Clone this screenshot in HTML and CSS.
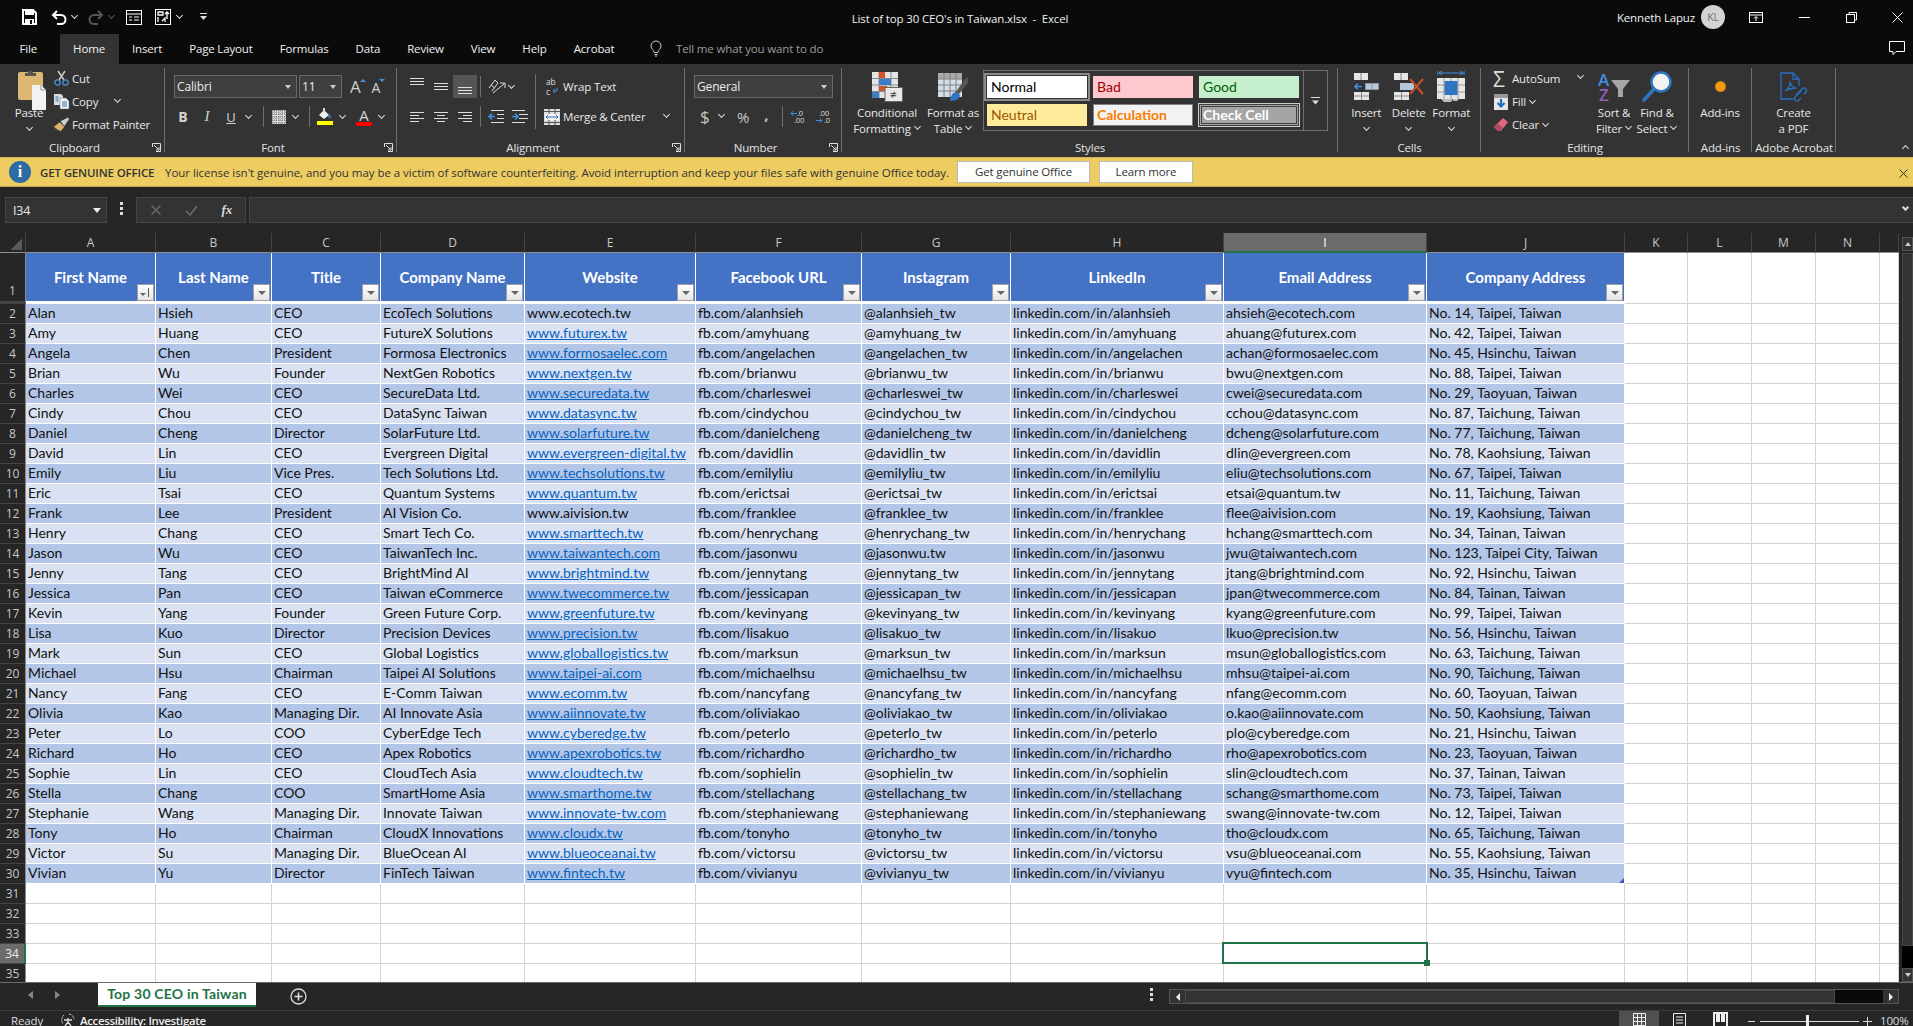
FILE: index.html
```html
<!DOCTYPE html>
<html lang="en">
<head>
  <meta charset="UTF-8">
  <title>List of top 30 CEO's in Taiwan.xlsx - Excel</title>
  <link rel="stylesheet" href="styles.css">
</head>
<body>
<div class="window">

  <!-- circuit wallpaper behind the title bar -->
  <svg class="circuit" width="520" height="64" viewBox="0 0 520 64" fill="none" stroke="#262626" stroke-width="3">
    <circle cx="36" cy="14" r="3.5"/><path d="M40 14H209"/><circle cx="213" cy="14" r="3.5"/>
    <circle cx="56" cy="41" r="17" stroke-width="4"/><path d="M49 34l15 15M48 46V33h13" stroke-width="4"/>
    <circle cx="102" cy="33" r="3.5"/><path d="M106 33H200L228 62"/><circle cx="242" cy="43" r="3.5"/><path d="M246 43L268 64M238 43H212L192 61H27"/>
    <circle cx="310" cy="17" r="30" stroke-width="5"/><path d="M298 5H322L306 30" stroke-width="5"/>
    <path d="M267 7L290 52H393L423 23H520M467 64L500 32H520M295 40L320 62H420"/>
  </svg>

  <div class="titlebar">
    <div class="qat">
      <svg class="q-save" width="15" height="16" viewBox="0 0 15 16"><path d="M1 1h10l3 3v11H1z" fill="none" stroke="#fff" stroke-width="2"/><rect x="3" y="1" width="9" height="5" fill="#fff"/><rect x="3" y="10" width="9" height="5" fill="#fff"/><rect x="8" y="11" width="2" height="4" fill="#0a0a0a"/></svg>
      <svg class="q-undo" width="16" height="15" viewBox="0 0 16 15" fill="none" stroke="#fff" stroke-width="2"><path d="M6 1L2 5l4 4M2 5h8a4 4 0 0 1 0 9H6"/></svg>
      <span class="chev q-c1"></span>
      <svg class="q-redo" width="16" height="15" viewBox="0 0 16 15" fill="none" stroke="#555" stroke-width="2"><path d="M10 1l4 4-4 4M14 5H6a4 4 0 0 0 0 9h4"/></svg>
      <span class="chev dim q-c2"></span>
      <svg class="q-form" width="16" height="15" viewBox="0 0 16 15" fill="none" stroke="#fff"><rect x=".5" y=".5" width="15" height="14"/><path d="M1 4h14M3 7h3M3 10h3M8 7h5M8 10h5"/></svg>
      <svg class="q-print" width="16" height="16" viewBox="0 0 16 16" fill="none" stroke="#fff"><rect x=".5" y=".5" width="15" height="15"/><path d="M3 3h5v3H3zM3 8v5M7 12l3-3 0 4M12 3v7M10 5l2-2 2 2" stroke-width="1.3"/></svg>
      <span class="chev q-c3"></span>
      <svg class="q-cust" width="7" height="8" viewBox="0 0 7 8" fill="#ddd"><rect width="7" height="1"/><path d="M0 3h7L3.500 7z"/></svg>
    </div>
    <div class="doc-title">List of top 30 CEO's in Taiwan.xlsx &nbsp;-&nbsp; Excel</div>
    <div class="winctl">
      <span class="user">Kenneth Lapuz</span>
      <span class="avatar">KL</span>
      <svg class="w-disp" width="14" height="11" viewBox="0 0 14 11" fill="none" stroke="#fff"><rect x=".5" y=".5" width="13" height="10"/><path d="M1 3h12M7 9V5M5 6.500l2-2 2 2"/></svg>
      <svg class="w-min" width="11" height="1" viewBox="0 0 11 1"><rect width="11" height="1" fill="#fff"/></svg>
      <svg class="w-max" width="11" height="11" viewBox="0 0 11 11" fill="none" stroke="#fff"><rect x=".5" y="2.500" width="8" height="8"/><path d="M3 2V.500h7.500V8H9"/></svg>
      <svg class="w-close" width="11" height="11" viewBox="0 0 11 11" stroke="#fff"><path d="M.5.500l10 10M10.500.500l-10 10"/></svg>
    </div>
  </div>

  <div class="tabs">
    <span class="tab first">File</span>
    <span class="tab active">Home</span>
    <span class="tab">Insert</span>
    <span class="tab">Page Layout</span>
    <span class="tab">Formulas</span>
    <span class="tab">Data</span>
    <span class="tab">Review</span>
    <span class="tab">View</span>
    <span class="tab">Help</span>
    <span class="tab">Acrobat</span>
    <svg class="bulb" width="12" height="16" viewBox="0 0 12 16" fill="none" stroke="#ccc"><path d="M4 11.500C4 9 1 8 1 5a5 5 0 0 1 10 0c0 3-3 4-3 6.500zM4.500 13.500h3M5 15h2"/></svg>
    <span class="tell">Tell me what you want to do</span>
    <svg class="comment" width="16" height="15" viewBox="0 0 16 15" fill="none" stroke="#fff"><path d="M.5.500h15v10H7l-3 3v-3H.5z"/></svg>
  </div>

  <div class="ribbon">

    <div class="group g-clip">
      <div class="body">
        <div class="big b-paste">
          <div class="big-icon">
            <svg width="28" height="38" viewBox="0 0 28 38"><rect y="0" width="25" height="28" rx="2" fill="#dcb872"/><path d="M7 1h3a2.500 2.500 0 0 1 5 0h3v3H7z" fill="#555"/><path d="M14 13h9l5 5v20H14z" fill="#f2f2f2"/><path d="M23 13v5h5" fill="none" stroke="#999"/></svg>
          </div>
          <div class="big-line">Paste</div>
          <div class="big-line"><span class="chev"></span></div>
        </div>
        <div class="small-list">
          <div class="small">
            <svg class="s-ic" width="15" height="15" viewBox="0 0 15 15" fill="none"><path d="M4 0l6 9M11 0L5 9" stroke="#ccc" stroke-width="1.500"/><circle cx="3.500" cy="11.500" r="2.700" stroke="#4a90d9" stroke-width="1.300"/><circle cx="11.500" cy="11.500" r="2.700" stroke="#4a90d9" stroke-width="1.300"/></svg>
            Cut
          </div>
          <div class="small">
            <svg class="s-ic" width="15" height="15" viewBox="0 0 15 15"><path d="M0 0h7l2 2v9H0z" fill="#ddd"/><path d="M6 4h6l3 3v8H6z" fill="#f4f4f4" stroke="#666" stroke-width=".5"/><path d="M8 8h5M8 10h5M8 12h5M1.500 3h3M1.500 5h3M1.500 7h3" stroke="#2f75c0"/></svg>
            Copy <span class="chev c-copy"></span>
          </div>
          <div class="small">
            <svg class="s-ic" width="16" height="15" viewBox="0 0 16 15"><path d="M0 10l6-5 5 5-4 5-2-2-1 1-1-2-1 0z" fill="#dcb06a"/><path d="M7 4l8-4 1 2-5 7z" fill="#ccc"/></svg>
            Format Painter
          </div>
        </div>
      </div>
      <div class="label">Clipboard</div>
      <svg class="launch" width="9" height="9" viewBox="0 0 9 9" fill="none" stroke="#ddd"><path d="M.5 4V.500H8.500V8.500H4M2 2l5 5M7 4v3H4"/></svg>
    </div>

    <div class="group g-font">
      <div class="body col">
        <div class="row1 pad-font">
          <div class="combo c-font"><span>Calibri</span><i class="tri"></i></div>
          <div class="combo c-size"><span>11</span><i class="tri"></i></div>
          <span class="grow-a up">A</span>
          <span class="grow-a down">A</span>
        </div>
        <div class="row2 pad-font2">
          <span class="tool bold">B</span>
          <span class="tool ital">I</span>
          <span class="tool under">U</span>
          <span class="drop"><span class="chev"></span></span>
          <span class="vsep s5"></span>
          <span class="tool">
            <svg width="14" height="14" viewBox="0 0 14 14"><rect width="14" height="14" fill="#e0e0e0"/><path d="M1 0v14M4 0v14M7 0v14M10 0v14M13 0v14M0 1h14M0 4h14M0 7h14M0 10h14M0 13h14" stroke="#666" stroke-dasharray="1 1"/></svg>
          </span>
          <span class="drop"><span class="chev"></span></span>
          <span class="vsep s8"></span>
          <span class="tool">
            <svg width="16" height="17" viewBox="0 0 16 17"><path d="M2 7l5-5 5 5-5 4z" fill="#f0f0f0"/><path d="M6 0h2v4H6z" fill="#ddd"/><path d="M12 6c2 1 2 3 2 4h-3z" fill="#2f75c0"/><rect y="13" width="16" height="4" fill="#ff0"/></svg>
          </span>
          <span class="drop"><span class="chev"></span></span>
          <span class="tool fcolor">A</span>
          <span class="drop"><span class="chev"></span></span>
        </div>
      </div>
      <div class="label">Font</div>
      <svg class="launch" width="9" height="9" viewBox="0 0 9 9" fill="none" stroke="#ddd"><path d="M.5 4V.500H8.500V8.500H4M2 2l5 5M7 4v3H4"/></svg>
    </div>

    <div class="group g-align">
      <div class="body">
        <div class="col al-left">
          <div class="row1">
            <span class="tool"><svg width="14" height="8" viewBox="0 0 14 8" stroke="#ddd"><path d="M0 .500h14M0 3.500h14M0 6.500h14"/></svg></span>
            <span class="tool"><svg width="14" height="8" viewBox="0 0 14 8" stroke="#ddd"><path d="M0 .500h14M0 3.500h14M0 6.500h14"/></svg></span>
            <span class="tool on"><svg class="al-bot" width="14" height="8" viewBox="0 0 14 8" stroke="#ddd"><path d="M0 .500h14M0 3.500h14M0 6.500h14"/></svg></span>
            <span class="vsep s3"></span>
            <span class="tool t-orient"><svg width="18" height="16" viewBox="0 0 18 16" fill="none" stroke="#ddd"><path d="M1 9l6-8 3 3-6 8M3 6l4 3M5 14L16 5M12 4h5v5"/></svg></span>
            <span class="drop d-orient"><span class="chev"></span></span>
          </div>
          <div class="row2">
            <span class="tool"><svg width="14" height="10" viewBox="0 0 14 10" stroke="#ddd"><path d="M0 .500h14M0 3.500h9M0 6.500h14M0 9.500h9"/></svg></span>
            <span class="tool"><svg width="14" height="10" viewBox="0 0 14 10" stroke="#ddd"><path d="M0 .500h14M3 3.500h8M0 6.500h14M3 9.500h8"/></svg></span>
            <span class="tool"><svg width="14" height="10" viewBox="0 0 14 10" stroke="#ddd"><path d="M0 .500h14M5 3.500h9M0 6.500h14M5 9.500h9"/></svg></span>
            <span class="vsep s3"></span>
            <span class="tool t-ind1"><svg width="16" height="13" viewBox="0 0 16 13"><path d="M3 .500h13M9 4.500h7M9 8.500h7M3 12.500h13" stroke="#ddd"/><path d="M7 6.500H1M4 3.500l-3 3 3 3" stroke="#3f8ee0" stroke-width="1.500" fill="none"/></svg></span>
            <span class="tool t-ind2"><svg width="16" height="13" viewBox="0 0 16 13"><path d="M0 .500h13M7 4.500h9M7 8.500h9M0 12.500h13" stroke="#ddd"/><path d="M0 6.500h6M3 3.500l3 3-3 3" stroke="#3f8ee0" stroke-width="1.500" fill="none"/></svg></span>
          </div>
        </div>
        <span class="vsep tall"></span>
        <div class="col al-right">
          <div class="row1 wrap-row">
            <svg class="wrap-ic" width="12" height="18" viewBox="0 0 12 18"><text x="0" y="7" font-size="8.500" fill="#ddd" font-family="Open Sans">ab</text><text x="0" y="16.500" font-size="8.500" fill="#ddd" font-family="Open Sans">c</text><path d="M11 10v3H7M9 11l-2 2 2 2" fill="none" stroke="#3f8ee0"/></svg>
            Wrap Text
          </div>
          <div class="row2 merge-row">
            <svg class="merge-ic" width="16" height="16" viewBox="0 0 16 16"><rect width="16" height="16" fill="#ddd"/><rect x="1" y="5" width="14" height="6" fill="#f6f6f6"/><path d="M0 2.500h16M0 13.500h16M5 0v5M11 0v5M5 11v5M11 11v5" stroke="#555"/><path d="M2 8h12M4 6L2 8l2 2M12 6l2 2-2 2" fill="none" stroke="#2f75c0"/></svg>
            Merge &amp; Center
            <span class="chev c-merge"></span>
          </div>
        </div>
      </div>
      <div class="label">Alignment</div>
      <svg class="launch" width="9" height="9" viewBox="0 0 9 9" fill="none" stroke="#ddd"><path d="M.5 4V.500H8.500V8.500H4M2 2l5 5M7 4v3H4"/></svg>
    </div>

    <div class="group g-num">
      <div class="body col">
        <div class="row1 pad-font">
          <div class="combo c-num"><span>General</span><i class="tri"></i></div>
        </div>
        <div class="row2 num-row">
          <span class="n-dollar">$</span>
          <span class="chev n-c"></span>
          <span class="n-pct">%</span>
          <span class="n-comma">,</span>
          <span class="vsep n-sep"></span>
          <svg class="n-inc" width="15" height="14" viewBox="0 0 15 14"><text x="6" y="6" font-size="7.500" fill="#ddd" font-family="Open Sans">.0</text><text x="3" y="13" font-size="7.500" fill="#ddd" font-family="Open Sans">.00</text><path d="M6 3.500H0M2.500 1L0 3.500 2.500 6" fill="none" stroke="#3f8ee0"/></svg>
          <svg class="n-dec" width="15" height="14" viewBox="0 0 15 14"><text x="3" y="6" font-size="7.500" fill="#ddd" font-family="Open Sans">.00</text><text x="8" y="13" font-size="7.500" fill="#ddd" font-family="Open Sans">.0</text><path d="M0 10.500h6M3.500 8L6 10.500 3.500 13" fill="none" stroke="#3f8ee0"/></svg>
        </div>
      </div>
      <div class="label">Number</div>
      <svg class="launch" width="9" height="9" viewBox="0 0 9 9" fill="none" stroke="#ddd"><path d="M.5 4V.500H8.500V8.500H4M2 2l5 5M7 4v3H4"/></svg>
    </div>

    <div class="group g-styles">
      <div class="body">
        <div class="big b-cf">
          <div class="big-icon">
            <svg width="31" height="30" viewBox="0 0 31 30"><rect width="26" height="26" fill="#e4e4e4"/><path d="M7 0v26M19 0v26M0 6.500h26M0 13h26M0 19.500h26" stroke="#8a8a8a"/><rect x="7" y="0" width="6" height="6" fill="#d1532b"/><rect x="7" y="7" width="12" height="6" fill="#3a7cc8"/><rect x="7" y="14" width="8" height="5" fill="#d1532b"/><rect x="0" y="20" width="7" height="6" fill="#3a7cc8"/><rect x="13" y="15.500" width="17.500" height="14" fill="#e8e8e8" stroke="#666"/><text x="18" y="27" font-size="12" fill="#333" font-family="Open Sans">≠</text></svg>
          </div>
          <div class="big-line">Conditional</div>
          <div class="big-line">Formatting <span class="chev in"></span></div>
        </div>
        <div class="big b-fat">
          <div class="big-icon">
            <svg width="30" height="28" viewBox="0 0 30 28"><rect width="24" height="24" fill="#d3dde6"/><rect width="24" height="6" fill="#aaa"/><path d="M6 0v24M12 0v24M18 0v24M0 6h24M0 12h24M0 18h24" stroke="#808080"/><path d="M17 20L27 6l3-2v6l-9 11z" fill="#555"/><path d="M12 28c0-5 3-9 6-9l4 3c0 3-3 6-10 6z" fill="#2f75c0"/></svg>
          </div>
          <div class="big-line">Format as</div>
          <div class="big-line">Table <span class="chev in"></span></div>
        </div>
        <div class="gallery">
          <div class="cells">
            <div class="st normal">Normal</div>
            <div class="st bad">Bad</div>
            <div class="st good">Good</div>
            <div class="st neutral">Neutral</div>
            <div class="st calc">Calculation</div>
            <div class="st check">Check Cell</div>
          </div>
          <div class="more"><svg width="9" height="8" viewBox="0 0 9 8" fill="#ddd"><rect width="9" height="1"/><path d="M1 3.500h7L4.500 7.500z"/></svg></div>
        </div>
      </div>
      <div class="label">Styles</div>
    </div>

    <div class="group g-cells">
      <div class="body">
        <div class="big b-cell">
          <div class="big-icon">
            <svg width="26" height="27" viewBox="0 0 26 27"><path d="M1 0h14v7H1z" fill="#e6e6e6"/><path d="M8 0v7" stroke="#888"/><rect x="12" y="10" width="14" height="7" fill="#8796a8"/><rect x="13" y="11" width="5.500" height="5" fill="#b6c7da"/><rect x="19.500" y="11" width="5.500" height="5" fill="#b6c7da"/><path d="M9 13.500H2M5 10.500l-3 3 3 3" fill="none" stroke="#3f8ee0" stroke-width="1.600"/><rect x="1" y="19" width="15" height="8" fill="#e6e6e6"/><path d="M8.500 19v8M1 23h15" stroke="#888"/></svg>
          </div>
          <div class="big-line">Insert</div>
          <div class="big-line"><span class="chev"></span></div>
        </div>
        <div class="big b-cell">
          <div class="big-icon">
            <svg width="30" height="27" viewBox="0 0 30 27"><path d="M0 0h14v7H0z" fill="#e6e6e6"/><path d="M7 0v7" stroke="#888"/><rect x="6" y="10" width="14" height="7" fill="#b6c7da"/><rect x="0" y="19" width="15" height="8" fill="#e6e6e6"/><path d="M7.500 19v8M0 23h15" stroke="#888"/><path d="M16 6l13 15M29 6L16 21" stroke="#c8502a" stroke-width="2"/></svg>
          </div>
          <div class="big-line">Delete</div>
          <div class="big-line"><span class="chev"></span></div>
        </div>
        <div class="big b-cell">
          <div class="big-icon">
            <svg width="28" height="31" viewBox="0 0 28 31"><path d="M1 0v4M27 0v4M2 2h24M5 0L2 2l3 2M23 0l3 2-3 2" fill="none" stroke="#3f8ee0"/><rect y="7" width="28" height="21" fill="#e6e6e6"/><path d="M7 7v21M21 7v21M14 7v21M0 14h28M0 21h28" stroke="#999"/><rect x="7.500" y="10" width="13" height="14" fill="#2f75c0"/><path d="M4 28h12l-2 3H7zM16 28h6l-2 2h-4z" fill="#bbb"/></svg>
          </div>
          <div class="big-line">Format</div>
          <div class="big-line"><span class="chev"></span></div>
        </div>
      </div>
      <div class="label">Cells</div>
    </div>

    <div class="group g-edit">
      <div class="body">
        <div class="small-list e-list">
          <div class="small"><span class="sigma">Σ</span> AutoSum <span class="chev c-sum"></span></div>
          <div class="small">
            <svg class="e-ic" width="14" height="16" viewBox="0 0 14 16"><rect width="14" height="16" fill="#e6e6e6"/><rect width="14" height="4" fill="#999"/><path d="M7 5v7M3.500 9L7 12.500 10.500 9" fill="none" stroke="#1f6fc4" stroke-width="2.200"/></svg>
            Fill <span class="chev in"></span>
          </div>
          <div class="small">
            <svg class="e-ic" width="14" height="14" viewBox="0 0 14 14"><path d="M9 0l5 4-7 9H4L0 9z" fill="#e0697f"/><path d="M0 9l4 4h3l2-3-5-4z" fill="#b04a5f"/></svg>
            Clear <span class="chev in"></span>
          </div>
        </div>
        <div class="big b-sort">
          <div class="big-icon">
            <svg width="32" height="30" viewBox="0 0 32 30"><text x="0" y="14" font-size="17" fill="#3f8ee0" font-family="Open Sans" font-weight="600">A</text><text x="1" y="29" font-size="17" fill="#8e5fb5" font-family="Open Sans" font-weight="600">Z</text><path d="M13 8h19l-7 9v8h-5v-8z" fill="#a5a5a5"/></svg>
          </div>
          <div class="big-line">Sort &amp;</div>
          <div class="big-line">Filter <span class="chev in"></span></div>
        </div>
        <div class="big b-find">
          <div class="big-icon">
            <svg width="30" height="31" viewBox="0 0 30 31"><circle cx="19" cy="11" r="9.500" fill="#f2f2f2" stroke="#2f75c0" stroke-width="2.400"/><path d="M12 18L2 29" stroke="#2f75c0" stroke-width="3.500" stroke-linecap="round"/></svg>
          </div>
          <div class="big-line">Find &amp;</div>
          <div class="big-line">Select <span class="chev in"></span></div>
        </div>
      </div>
      <div class="label">Editing</div>
    </div>

    <div class="group g-addin">
      <div class="body">
        <div class="big b-full">
          <div class="big-icon"><span class="dot"></span></div>
          <div class="big-line">Add-ins</div>
        </div>
      </div>
      <div class="label">Add-ins</div>
    </div>

    <div class="group g-pdf">
      <div class="body">
        <div class="big b-full">
          <div class="big-icon">
            <svg width="27" height="29" viewBox="0 0 27 29" fill="none" stroke="#2a6fc4" stroke-width="1.300"><path d="M13 27H1V1h12l6 6v7M13 1v6h6M5 19c3-1 5-6 5-9 1 4 3 6 6 6-4 0-8 1-11 3z"/><path d="M16 23l6-6a2.500 2.500 0 0 1 4 3l-2 2M21 19l-6 6a2.500 2.500 0 0 0 4 3l2-2"/></svg>
          </div>
          <div class="big-line">Create</div>
          <div class="big-line">a PDF</div>
        </div>
      </div>
      <div class="label">Adobe Acrobat</div>
    </div>

    <div class="collapse"><span class="chev flip"></span></div>
  </div>

  <div class="msgbar">
    <span class="info">i</span>
    <span class="msg-head">GET GENUINE OFFICE</span>
    <span class="msg-text">Your license isn't genuine, and you may be a victim of software counterfeiting. Avoid interruption and keep your files safe with genuine Office today.</span>
    <span class="msg-btn b1">Get genuine Office</span>
    <span class="msg-btn b2">Learn more</span>
    <svg class="msg-x" width="9" height="9" viewBox="0 0 9 9" stroke="#333"><path d="M.5.500l8 8M8.500.500l-8 8"/></svg>
  </div>

  <div class="fxbar">
    <div class="namebox"><span>I34</span><i class="tri big-tri"></i></div>
    <span class="dots"></span>
    <div class="fx-btns">
      <svg width="10" height="10" viewBox="0 0 10 10" stroke="#666" stroke-width="1.500"><path d="M.5.500l9 9M9.500.500l-9 9"/></svg>
      <svg width="13" height="11" viewBox="0 0 13 11" fill="none" stroke="#666" stroke-width="1.800"><path d="M1 6l4 4 7-9"/></svg>
      <span class="fx">fx</span>
    </div>
    <div class="fx-input"><span class="chev fx-chev"></span></div>
  </div>

  <div class="sheet">
    <div class="grid-wrap">
      <table class="grid">
        <colgroup>
          <col class="c-rh"><col class="c-a"><col class="c-b"><col class="c-c"><col class="c-d"><col class="c-e"><col class="c-f"><col class="c-g"><col class="c-h"><col class="c-i"><col class="c-j"><col class="c-k"><col class="c-l"><col class="c-l"><col class="c-l"><col class="c-o">
        </colgroup>
        <thead>
          <tr class="heads">
            <th class="corner"></th><th>A</th><th>B</th><th>C</th><th>D</th><th>E</th><th>F</th><th>G</th><th>H</th><th class="cur">I</th><th>J</th><th>K</th><th>L</th><th>M</th><th>N</th><th></th>
          </tr>
        </thead>
        <tbody>
          <tr class="r1">
            <th>1</th>
            <td class="hd">First Name<span class="filter sorted"></span></td>
            <td class="hd">Last Name<span class="filter"></span></td>
            <td class="hd">Title<span class="filter"></span></td>
            <td class="hd">Company Name<span class="filter"></span></td>
            <td class="hd">Website<span class="filter"></span></td>
            <td class="hd">Facebook URL<span class="filter"></span></td>
            <td class="hd">Instagram<span class="filter"></span></td>
            <td class="hd">LinkedIn<span class="filter"></span></td>
            <td class="hd">Email Address<span class="filter"></span></td>
            <td class="hd">Company Address<span class="filter"></span></td>
            <td></td><td></td><td></td><td></td><td></td>
          </tr>
          <tr class="dk"><th>2</th><td>Alan</td><td>Hsieh</td><td>CEO</td><td>EcoTech Solutions</td><td>www.ecotech.tw</td><td>fb.com/alanhsieh</td><td>@alanhsieh_tw</td><td>linkedin.com/in/alanhsieh</td><td>ahsieh@ecotech.com</td><td>No. 14, Taipei, Taiwan</td><td></td><td></td><td></td><td></td><td></td></tr>
          <tr class="lt"><th>3</th><td>Amy</td><td>Huang</td><td>CEO</td><td>FutureX Solutions</td><td><a href="#">www.futurex.tw</a></td><td>fb.com/amyhuang</td><td>@amyhuang_tw</td><td>linkedin.com/in/amyhuang</td><td>ahuang@futurex.com</td><td>No. 42, Taipei, Taiwan</td><td></td><td></td><td></td><td></td><td></td></tr>
          <tr class="dk"><th>4</th><td>Angela</td><td>Chen</td><td>President</td><td>Formosa Electronics</td><td><a href="#">www.formosaelec.com</a></td><td>fb.com/angelachen</td><td>@angelachen_tw</td><td>linkedin.com/in/angelachen</td><td>achan@formosaelec.com</td><td>No. 45, Hsinchu, Taiwan</td><td></td><td></td><td></td><td></td><td></td></tr>
          <tr class="lt"><th>5</th><td>Brian</td><td>Wu</td><td>Founder</td><td>NextGen Robotics</td><td><a href="#">www.nextgen.tw</a></td><td>fb.com/brianwu</td><td>@brianwu_tw</td><td>linkedin.com/in/brianwu</td><td>bwu@nextgen.com</td><td>No. 88, Taipei, Taiwan</td><td></td><td></td><td></td><td></td><td></td></tr>
          <tr class="dk"><th>6</th><td>Charles</td><td>Wei</td><td>CEO</td><td>SecureData Ltd.</td><td><a href="#">www.securedata.tw</a></td><td>fb.com/charleswei</td><td>@charleswei_tw</td><td>linkedin.com/in/charleswei</td><td>cwei@securedata.com</td><td>No. 29, Taoyuan, Taiwan</td><td></td><td></td><td></td><td></td><td></td></tr>
          <tr class="lt"><th>7</th><td>Cindy</td><td>Chou</td><td>CEO</td><td>DataSync Taiwan</td><td><a href="#">www.datasync.tw</a></td><td>fb.com/cindychou</td><td>@cindychou_tw</td><td>linkedin.com/in/cindychou</td><td>cchou@datasync.com</td><td>No. 87, Taichung, Taiwan</td><td></td><td></td><td></td><td></td><td></td></tr>
          <tr class="dk"><th>8</th><td>Daniel</td><td>Cheng</td><td>Director</td><td>SolarFuture Ltd.</td><td><a href="#">www.solarfuture.tw</a></td><td>fb.com/danielcheng</td><td>@danielcheng_tw</td><td>linkedin.com/in/danielcheng</td><td>dcheng@solarfuture.com</td><td>No. 77, Taichung, Taiwan</td><td></td><td></td><td></td><td></td><td></td></tr>
          <tr class="lt"><th>9</th><td>David</td><td>Lin</td><td>CEO</td><td>Evergreen Digital</td><td><a href="#">www.evergreen-digital.tw</a></td><td>fb.com/davidlin</td><td>@davidlin_tw</td><td>linkedin.com/in/davidlin</td><td>dlin@evergreen.com</td><td>No. 78, Kaohsiung, Taiwan</td><td></td><td></td><td></td><td></td><td></td></tr>
          <tr class="dk"><th>10</th><td>Emily</td><td>Liu</td><td>Vice Pres.</td><td>Tech Solutions Ltd.</td><td><a href="#">www.techsolutions.tw</a></td><td>fb.com/emilyliu</td><td>@emilyliu_tw</td><td>linkedin.com/in/emilyliu</td><td>eliu@techsolutions.com</td><td>No. 67, Taipei, Taiwan</td><td></td><td></td><td></td><td></td><td></td></tr>
          <tr class="lt"><th>11</th><td>Eric</td><td>Tsai</td><td>CEO</td><td>Quantum Systems</td><td><a href="#">www.quantum.tw</a></td><td>fb.com/erictsai</td><td>@erictsai_tw</td><td>linkedin.com/in/erictsai</td><td>etsai@quantum.tw</td><td>No. 11, Taichung, Taiwan</td><td></td><td></td><td></td><td></td><td></td></tr>
          <tr class="dk"><th>12</th><td>Frank</td><td>Lee</td><td>President</td><td>AI Vision Co.</td><td>www.aivision.tw</td><td>fb.com/franklee</td><td>@franklee_tw</td><td>linkedin.com/in/franklee</td><td>flee@aivision.com</td><td>No. 19, Kaohsiung, Taiwan</td><td></td><td></td><td></td><td></td><td></td></tr>
          <tr class="lt"><th>13</th><td>Henry</td><td>Chang</td><td>CEO</td><td>Smart Tech Co.</td><td><a href="#">www.smarttech.tw</a></td><td>fb.com/henrychang</td><td>@henrychang_tw</td><td>linkedin.com/in/henrychang</td><td>hchang@smarttech.com</td><td>No. 34, Tainan, Taiwan</td><td></td><td></td><td></td><td></td><td></td></tr>
          <tr class="dk"><th>14</th><td>Jason</td><td>Wu</td><td>CEO</td><td>TaiwanTech Inc.</td><td><a href="#">www.taiwantech.com</a></td><td>fb.com/jasonwu</td><td>@jasonwu.tw</td><td>linkedin.com/in/jasonwu</td><td>jwu@taiwantech.com</td><td>No. 123, Taipei City, Taiwan</td><td></td><td></td><td></td><td></td><td></td></tr>
          <tr class="lt"><th>15</th><td>Jenny</td><td>Tang</td><td>CEO</td><td>BrightMind AI</td><td><a href="#">www.brightmind.tw</a></td><td>fb.com/jennytang</td><td>@jennytang_tw</td><td>linkedin.com/in/jennytang</td><td>jtang@brightmind.com</td><td>No. 92, Hsinchu, Taiwan</td><td></td><td></td><td></td><td></td><td></td></tr>
          <tr class="dk"><th>16</th><td>Jessica</td><td>Pan</td><td>CEO</td><td>Taiwan eCommerce</td><td><a href="#">www.twecommerce.tw</a></td><td>fb.com/jessicapan</td><td>@jessicapan_tw</td><td>linkedin.com/in/jessicapan</td><td>jpan@twecommerce.com</td><td>No. 84, Tainan, Taiwan</td><td></td><td></td><td></td><td></td><td></td></tr>
          <tr class="lt"><th>17</th><td>Kevin</td><td>Yang</td><td>Founder</td><td>Green Future Corp.</td><td><a href="#">www.greenfuture.tw</a></td><td>fb.com/kevinyang</td><td>@kevinyang_tw</td><td>linkedin.com/in/kevinyang</td><td>kyang@greenfuture.com</td><td>No. 99, Taipei, Taiwan</td><td></td><td></td><td></td><td></td><td></td></tr>
          <tr class="dk"><th>18</th><td>Lisa</td><td>Kuo</td><td>Director</td><td>Precision Devices</td><td><a href="#">www.precision.tw</a></td><td>fb.com/lisakuo</td><td>@lisakuo_tw</td><td>linkedin.com/in/lisakuo</td><td>lkuo@precision.tw</td><td>No. 56, Hsinchu, Taiwan</td><td></td><td></td><td></td><td></td><td></td></tr>
          <tr class="lt"><th>19</th><td>Mark</td><td>Sun</td><td>CEO</td><td>Global Logistics</td><td><a href="#">www.globallogistics.tw</a></td><td>fb.com/marksun</td><td>@marksun_tw</td><td>linkedin.com/in/marksun</td><td>msun@globallogistics.com</td><td>No. 63, Taichung, Taiwan</td><td></td><td></td><td></td><td></td><td></td></tr>
          <tr class="dk"><th>20</th><td>Michael</td><td>Hsu</td><td>Chairman</td><td>Taipei AI Solutions</td><td><a href="#">www.taipei-ai.com</a></td><td>fb.com/michaelhsu</td><td>@michaelhsu_tw</td><td>linkedin.com/in/michaelhsu</td><td>mhsu@taipei-ai.com</td><td>No. 90, Taichung, Taiwan</td><td></td><td></td><td></td><td></td><td></td></tr>
          <tr class="lt"><th>21</th><td>Nancy</td><td>Fang</td><td>CEO</td><td>E-Comm Taiwan</td><td><a href="#">www.ecomm.tw</a></td><td>fb.com/nancyfang</td><td>@nancyfang_tw</td><td>linkedin.com/in/nancyfang</td><td>nfang@ecomm.com</td><td>No. 60, Taoyuan, Taiwan</td><td></td><td></td><td></td><td></td><td></td></tr>
          <tr class="dk"><th>22</th><td>Olivia</td><td>Kao</td><td>Managing Dir.</td><td>AI Innovate Asia</td><td><a href="#">www.aiinnovate.tw</a></td><td>fb.com/oliviakao</td><td>@oliviakao_tw</td><td>linkedin.com/in/oliviakao</td><td>o.kao@aiinnovate.com</td><td>No. 50, Kaohsiung, Taiwan</td><td></td><td></td><td></td><td></td><td></td></tr>
          <tr class="lt"><th>23</th><td>Peter</td><td>Lo</td><td>COO</td><td>CyberEdge Tech</td><td><a href="#">www.cyberedge.tw</a></td><td>fb.com/peterlo</td><td>@peterlo_tw</td><td>linkedin.com/in/peterlo</td><td>plo@cyberedge.com</td><td>No. 21, Hsinchu, Taiwan</td><td></td><td></td><td></td><td></td><td></td></tr>
          <tr class="dk"><th>24</th><td>Richard</td><td>Ho</td><td>CEO</td><td>Apex Robotics</td><td><a href="#">www.apexrobotics.tw</a></td><td>fb.com/richardho</td><td>@richardho_tw</td><td>linkedin.com/in/richardho</td><td>rho@apexrobotics.com</td><td>No. 23, Taoyuan, Taiwan</td><td></td><td></td><td></td><td></td><td></td></tr>
          <tr class="lt"><th>25</th><td>Sophie</td><td>Lin</td><td>CEO</td><td>CloudTech Asia</td><td><a href="#">www.cloudtech.tw</a></td><td>fb.com/sophielin</td><td>@sophielin_tw</td><td>linkedin.com/in/sophielin</td><td>slin@cloudtech.com</td><td>No. 37, Tainan, Taiwan</td><td></td><td></td><td></td><td></td><td></td></tr>
          <tr class="dk"><th>26</th><td>Stella</td><td>Chang</td><td>COO</td><td>SmartHome Asia</td><td><a href="#">www.smarthome.tw</a></td><td>fb.com/stellachang</td><td>@stellachang_tw</td><td>linkedin.com/in/stellachang</td><td>schang@smarthome.com</td><td>No. 73, Taipei, Taiwan</td><td></td><td></td><td></td><td></td><td></td></tr>
          <tr class="lt"><th>27</th><td>Stephanie</td><td>Wang</td><td>Managing Dir.</td><td>Innovate Taiwan</td><td><a href="#">www.innovate-tw.com</a></td><td>fb.com/stephaniewang</td><td>@stephaniewang</td><td>linkedin.com/in/stephaniewang</td><td>swang@innovate-tw.com</td><td>No. 12, Taipei, Taiwan</td><td></td><td></td><td></td><td></td><td></td></tr>
          <tr class="dk"><th>28</th><td>Tony</td><td>Ho</td><td>Chairman</td><td>CloudX Innovations</td><td><a href="#">www.cloudx.tw</a></td><td>fb.com/tonyho</td><td>@tonyho_tw</td><td>linkedin.com/in/tonyho</td><td>tho@cloudx.com</td><td>No. 65, Taichung, Taiwan</td><td></td><td></td><td></td><td></td><td></td></tr>
          <tr class="lt"><th>29</th><td>Victor</td><td>Su</td><td>Managing Dir.</td><td>BlueOcean AI</td><td><a href="#">www.blueoceanai.tw</a></td><td>fb.com/victorsu</td><td>@victorsu_tw</td><td>linkedin.com/in/victorsu</td><td>vsu@blueoceanai.com</td><td>No. 55, Kaohsiung, Taiwan</td><td></td><td></td><td></td><td></td><td></td></tr>
          <tr class="dk"><th>30</th><td>Vivian</td><td>Yu</td><td>Director</td><td>FinTech Taiwan</td><td><a href="#">www.fintech.tw</a></td><td>fb.com/vivianyu</td><td>@vivianyu_tw</td><td>linkedin.com/in/vivianyu</td><td>vyu@fintech.com</td><td class="last">No. 35, Hsinchu, Taiwan</td><td></td><td></td><td></td><td></td><td></td></tr>
          <tr><th>31</th><td></td><td></td><td></td><td></td><td></td><td></td><td></td><td></td><td></td><td></td><td></td><td></td><td></td><td></td><td></td></tr>
          <tr><th>32</th><td></td><td></td><td></td><td></td><td></td><td></td><td></td><td></td><td></td><td></td><td></td><td></td><td></td><td></td><td></td></tr>
          <tr><th>33</th><td></td><td></td><td></td><td></td><td></td><td></td><td></td><td></td><td></td><td></td><td></td><td></td><td></td><td></td><td></td></tr>
          <tr><th class="cur">34</th><td></td><td></td><td></td><td></td><td></td><td></td><td></td><td></td><td class="sel"></td><td></td><td></td><td></td><td></td><td></td><td></td></tr>
          <tr><th>35</th><td></td><td></td><td></td><td></td><td></td><td></td><td></td><td></td><td></td><td></td><td></td><td></td><td></td><td></td><td></td></tr>
        </tbody>
      </table>
    </div>
    <div class="vscroll">
      <div class="sb-btn"><i class="tri up-tri"></i></div>
      <div class="sb-thumb"></div>
      <div class="sb-black"></div>
      <div class="sb-btn"><i class="tri"></i></div>
    </div>
  </div>

  <div class="sheetbar">
    <span class="nav-l"></span>
    <span class="nav-r"></span>
    <span class="sheet-tab">Top 30 CEO in Taiwan</span>
    <svg class="add" width="17" height="17" viewBox="0 0 17 17" fill="none" stroke="#ddd"><circle cx="8.500" cy="8.500" r="7.500" stroke-width="1.300"/><path d="M8.500 4.500v8M4.500 8.500h8" stroke-width="1.600"/></svg>
    <span class="dots d2"></span>
    <div class="hscroll">
      <span class="hs-btn"><i class="hl"></i></span>
      <span class="hs-thumb"></span>
      <span class="hs-black"></span>
      <span class="hs-btn"><i class="hr"></i></span>
    </div>
  </div>

  <div class="status">
    <span class="ready">Ready</span>
    <svg class="acc" width="16" height="16" viewBox="0 0 16 16" fill="none" stroke="#ddd"><path d="M4 2a7 7 0 0 0-1 9M9 1a6 6 0 0 1 5 5" stroke-dasharray="2 1"/><path d="M8 5v4M4 7h8M8 9l-3 4M8 9l3 4" stroke-width="1.300"/></svg>
    <span class="acc-text">Accessibility: Investigate</span>
    <div class="views">
      <span class="view on"><svg width="13" height="13" viewBox="0 0 13 13" fill="none" stroke="#eee"><path d="M.5.500h12v12H.5zM4.500 0v13M8.500 0v13M0 4.500h13M0 8.500h13"/></svg></span>
      <span class="view"><svg width="13" height="15" viewBox="0 0 13 15" fill="none" stroke="#eee"><path d="M.5.500h12v14H.5zM3 4h7M3 7h7M3 10h7"/></svg></span>
      <span class="view"><svg width="13" height="15" viewBox="0 0 13 15"><path d="M0 0h13v15H0z" fill="none" stroke="#eee" stroke-width="2"/><path d="M2 0h4v9H2zM7 0h4v9H7z" fill="#eee"/></svg></span>
      <span class="zm-minus"></span>
      <span class="slider"><i></i></span>
      <span class="zm-plus"></span>
      <span class="pct">100%</span>
    </div>
  </div>
</div>
</body>
</html>
```
FILE: styles.css
```css
* { box-sizing: border-box; }
html, body { margin: 0; height: 100%; overflow: hidden; background: #262626; }
body {
  font-family: "Open Sans", "Noto Sans", sans-serif;
  font-size: 11.5px;
  letter-spacing: -0.15px;
  color: #e8e8e8;
}
svg { display: block; flex: none; overflow: visible; }

.window {
  position: relative;
  width: 1913px;
  height: 1026px;
  display: flex;
  flex-direction: column;
  overflow: hidden;
}
.circuit { position: absolute; left: 1393px; top: 0; }

/* chevrons and triangles */
.chev {
  display: inline-block;
  width: 5px;
  height: 5px;
  border-right: 1px solid #ddd;
  border-bottom: 1px solid #ddd;
  transform: rotate(45deg);
  flex: none;
}
.chev.dim { border-color: #555; }
.chev.in { margin: 0 1px 3px 1px; }
.chev.flip { transform: rotate(225deg); }
.tri {
  width: 0;
  height: 0;
  border-left: 3.5px solid transparent;
  border-right: 3.5px solid transparent;
  border-top: 4px solid #ccc;
  display: block;
}

/* title bar */
.titlebar {
  position: relative;
  height: 34px;
  background: #0a0a0a;
  display: grid;
  grid-template-columns: 1fr auto 1fr;
  align-items: center;
}
.qat { display: flex; align-items: center; padding-left: 22px; }
.q-undo { margin-left: 14px; }
.q-c1 { margin: -4px 0 0 5px; }
.q-redo { margin-left: 11px; }
.q-c2 { margin: -4px 0 0 5px; }
.q-form { margin-left: 12px; }
.q-print { margin-left: 13px; }
.q-c3 { margin: -4px 0 0 6px; }
.q-cust { margin-left: 18px; }
.doc-title { padding-left: 7px; color: #f0f0f0; font-size: 11.5px; padding-top: 2px; }
.winctl { display: flex; align-items: center; justify-content: flex-end; position: relative; }
.user { margin-right: 6px; color: #f2f2f2; }
.avatar {
  width: 24px;
  height: 24px;
  border-radius: 50%;
  background: #d4d4d4;
  color: #6a6a88;
  font-size: 10.5px;
  text-align: center;
  line-height: 24px;
  margin-right: 24px;
}
.w-disp { margin-right: 36px; }
.w-min { margin-right: 36px; }
.w-max { margin-right: 35px; }
.w-close { margin-right: 10px; }

/* ribbon tabs */
.tabs {
  position: relative;
  height: 30px;
  background: #0a0a0a;
  display: flex;
  align-items: stretch;
  padding-left: 6px;
}
.tab { padding: 0 13.5px; line-height: 30px; color: #f0f0f0; }
.tab.first { margin-right: 9px; }
.tab.active { background: #333; }
.bulb { align-self: center; margin-left: 22px; }
.tell { color: #9c9c9c; line-height: 30px; margin-left: 14px; }
.comment { position: absolute; right: 8px; top: 7px; }

/* ribbon */
.ribbon {
  position: relative;
  height: 93px;
  background: #333;
  display: flex;
  padding-top: 4px;
}
.group { position: relative; display: flex; flex-direction: column; height: 89px; flex: none; }
.group::after {
  content: "";
  position: absolute;
  right: 0;
  top: 0;
  bottom: 5px;
  width: 1px;
  background: #6e6e6e;
}
.g-clip { width: 165px; }
.g-font { width: 232px; }
.g-align { width: 288px; }
.g-num { width: 157px; }
.g-styles { width: 496px; }
.g-cells { width: 143px; }
.g-edit { width: 208px; }
.g-addin { width: 63px; }
.g-pdf { width: 84px; }
.body { height: 72px; display: flex; flex: none; }
.col { display: flex; flex-direction: column; }
.label { height: 16px; line-height: 16px; text-align: center; color: #e4e4e4; }
.g-clip .label, .g-font .label, .g-align .label, .g-num .label { padding-right: 16px; }
.launch { position: absolute; right: 4px; bottom: 5px; }

.big { display: flex; flex-direction: column; align-items: center; flex: none; }
.big-icon { height: 37px; display: flex; align-items: center; justify-content: center; flex: none; }
.big-line { height: 16px; line-height: 16px; white-space: nowrap; display: flex; align-items: center; justify-content: center; gap: 3px; flex: none; }
.big-line .chev { margin-top: -3px; }

.b-paste { width: 50px; margin-left: 4px; }
.b-paste .big-icon { align-items: flex-start; padding: 4px 0 0 5px; }
.small-list { display: flex; flex-direction: column; margin-top: -1px; }
.small { height: 23px; display: flex; align-items: center; gap: 3px; white-space: nowrap; position: relative; }
.s-ic { width: 15px; }
.c-copy { margin: -4px 0 0 14px; }

.row1 { height: 30px; padding-top: 7px; display: flex; align-items: stretch; flex: none; }
.row2 { height: 21px; margin-top: 8px; display: flex; align-items: center; flex: none; }
.pad-font { padding-left: 9px; }
.pad-font2 { padding-left: 6px; }
.combo {
  height: 23px;
  background: #3f3f3f;
  border: 1px solid #696969;
  display: flex;
  align-items: center;
  justify-content: space-between;
  padding: 0 5px 0 2px;
  color: #ececec;
  font-size: 12px;
}
.c-font { width: 123px; }
.c-size { width: 43px; margin-left: 2px; }
.c-num { width: 139px; }
.grow-a { font-size: 17px; color: #d0d0d0; line-height: 23px; position: relative; }
.grow-a.up { margin-left: 8px; }
.grow-a.down { margin-left: 11px; font-size: 14px; line-height: 25px; }
.grow-a::after {
  content: "";
  position: absolute;
  right: -5px;
  top: 4px;
  border-left: 3px solid transparent;
  border-right: 3px solid transparent;
}
.grow-a.up::after { border-bottom: 3px solid #4a90d9; }
.grow-a.down::after { border-top: 3px solid #4a90d9; }

.tool { width: 24px; height: 21px; display: flex; align-items: center; justify-content: center; flex: none; color: #d4d4d4; font-size: 14px; }
.row1 .tool { height: 23px; }
.tool.on { background: #555; }
.tool.on .al-bot { margin-top: 8px; }
.row1 .tool:nth-child(1) svg { margin-top: -9px; }
.bold { font-weight: 700; }
.ital { font-style: italic; font-family: "Liberation Serif", serif; font-size: 15px; }
.under { text-decoration: underline; font-size: 13px; }
.fcolor { font-size: 15px; line-height: 16px; border-bottom: 4px solid #f00; height: 18px; width: 16px; margin: 0 4px 0 9px; }
.drop { width: 10px; display: flex; justify-content: center; align-items: center; flex: none; margin-top: -3px; }
.vsep { width: 1px; background: #6e6e6e; height: 21px; flex: none; display: block; }
.row1 .vsep { align-self: center; }
.s3 { margin: 0 3px; }
.s5 { margin: 0 2.500px 0 10px; }
.s8 { margin: 0 3px 0 8.500px; }
.tall { height: 55px; margin: 6px 0 0 3px; }

.al-left { padding-left: 8px; }
.t-orient { margin-left: 1px; }
.d-orient { margin-left: -3px; }
.al-right { padding-left: 8px; }
.wrap-row { align-items: center; gap: 5px; }
.wrap-ic { margin-left: 2px; }
.merge-row { gap: 3px; }
.c-merge { margin: -4px 0 0 16px; }

.num-row { padding-left: 15px; position: relative; }
.n-dollar { font-size: 17px; color: #c8c8c8; width: 11px; }
.n-c { margin: -4px 0 0 8px; }
.n-pct { font-size: 15px; color: #c8c8c8; margin-left: 13px; }
.n-comma { font-size: 15px; font-weight: 700; color: #c8c8c8; margin: -6px 0 0 15px; }
.n-sep { margin-left: 14px; }
.n-inc { margin-left: 8px; }
.n-dec { margin-left: 10px; }

.b-cf { width: 72px; margin-left: 9px; }
.b-fat { width: 60px; }
.gallery {
  width: 345px;
  height: 61px;
  margin-top: 2px;
  border: 1px solid #6e6e6e;
  display: flex;
  background: #333;
}
.cells {
  flex: 1;
  padding: 5px 0 0 3px;
  display: grid;
  grid-template-columns: repeat(3, 100px);
  grid-auto-rows: 22px;
  column-gap: 6px;
  row-gap: 6px;
}
.st {
  font-family: "Lato", sans-serif;
  font-size: 14px;
  letter-spacing: 0;
  line-height: 22px;
  padding-left: 4px;
  overflow: hidden;
}
.normal { background: #fff; color: #000; outline: 2px solid #8a8a8a; outline-offset: 1px; }
.bad { background: #ffc7ce; color: #9c0006; }
.good { background: #c6efce; color: #006100; }
.neutral { background: #ffeb9c; color: #9c5700; }
.calc { background: #f2f2f2; color: #fa7d00; font-weight: 700; border: 1px solid #7f7f7f; line-height: 20px; padding-left: 3px; }
.check { background: #a5a5a5; color: #fff; font-weight: 700; border: 3px double #3f3f3f; line-height: 16px; padding-left: 1px; outline: 1px solid #ccc; }
.more { width: 24px; border-left: 1px solid #6e6e6e; display: flex; align-items: center; justify-content: center; }

.g-cells .body { padding-left: 7px; }
.b-cell { width: 42.500px; }
.e-list { padding-left: 12px; width: 111px; }
.sigma { font-size: 21px; line-height: 20px; width: 16px; color: #ddd; }
.small .e-ic { margin-left: 1px; margin-right: 1px; }
.c-sum { position: absolute; left: 85px; top: 6px; }
.b-sort { width: 44px; }
.b-find { width: 42px; }
.b-full { width: 100%; padding-right: 1px; }
.dot {
  width: 11px;
  height: 11px;
  border-radius: 50%;
  background: radial-gradient(circle, #f59a12 45%, #b06a10 100%);
}
.collapse { position: absolute; right: 5px; bottom: 3px; }

/* message bar */
.msgbar {
  height: 30px;
  background: #edcd62;
  border-top: 1px solid #d9b054;
  border-bottom: 1px solid #c9a24f;
  display: flex;
  align-items: center;
  color: #333;
  position: relative;
  padding-left: 9px;
}
.info {
  width: 22px;
  height: 22px;
  border-radius: 50%;
  background: #2c6ba4;
  color: #fff;
  font: 700 16px/22px "Liberation Serif", serif;
  text-align: center;
  flex: none;
}
.msg-head { margin-left: 9px; width: 125px; white-space: nowrap; font-weight: 600; }
.msg-text { white-space: nowrap; width: 792px; letter-spacing: -0.04px; }
.msg-btn {
  height: 22px;
  line-height: 20px;
  background: #fff;
  border: 1px solid #bbb;
  text-align: center;
  flex: none;
}
.b1 { width: 133px; }
.b2 { width: 94px; margin-left: 9px; }
.msg-x { position: absolute; right: 5px; top: 11px; }

/* formula bar */
.fxbar {
  height: 26px;
  margin: 10px 0;
  display: flex;
  background: #262626;
}
.namebox {
  width: 102px;
  margin-left: 5px;
  border: 1px solid #444;
  background: #333;
  display: flex;
  align-items: center;
  justify-content: space-between;
  padding: 0 5px 0 7px;
  font-size: 12.5px;
}
.big-tri { border-left-width: 4px; border-right-width: 4px; border-top: 5px solid #eee; }
.dots {
  width: 3px;
  height: 3px;
  margin: 5px 13px 0 13px;
  background: #ddd;
  box-shadow: 0 5px 0 #ddd, 0 10px 0 #ddd;
  flex: none;
}
.fx-btns {
  width: 110px;
  background: #333;
  border: 1px solid #444;
  display: flex;
  align-items: center;
  justify-content: space-between;
  padding: 0 13px 0 14px;
}
.fx { font: italic 700 13px "Liberation Serif", serif; color: #ddd; }
.fx-input {
  flex: 1;
  margin-left: 3px;
  background: #333;
  border: 1px solid #444;
  border-right: 0;
  position: relative;
}
.fx-chev { position: absolute; right: 5px; top: 7px; border-width: 0 2px 2px 0; }

/* the sheet */
.sheet { flex: 1; min-height: 0; display: flex; background: #262626; }
.grid-wrap { width: 1899px; overflow: hidden; }
.vscroll { width: 14px; padding: 4px 0 0 3px; display: flex; flex-direction: column; }
.sb-btn { height: 14px; display: flex; align-items: center; justify-content: center; background: #333; flex: none; border: 1px solid #555; }
.up-tri { transform: rotate(180deg); }
.sb-thumb { flex: 1; background: #333; margin: 2px 0 0; border: 1px solid #4a4a4a; }
.sb-black { height: 22px; background: #000; }

.grid {
  table-layout: fixed;
  width: 1899px;
  border-collapse: separate;
  border-spacing: 0;
  background: #fff;
  font-family: "Lato", sans-serif;
  font-size: 14px;
  letter-spacing: 0;
  color: #111;
}
.c-rh { width: 26px; }
.c-a { width: 130px; }
.c-b { width: 116px; }
.c-c { width: 109px; }
.c-d { width: 144px; }
.c-e { width: 171px; }
.c-f { width: 166px; }
.c-g { width: 149px; }
.c-h { width: 213px; }
.c-i { width: 203px; }
.c-j { width: 198px; }
.c-k { width: 63px; }
.c-l { width: 64px; }
.c-o { width: 19px; }

.grid th {
  background: #262626;
  color: #c8c8c8;
  font-family: "Open Sans", sans-serif;
  font-size: 12px;
  font-weight: 400;
  padding: 0;
  text-align: center;
  border-right: 1px solid #8a8a8a;
  border-bottom: 1px solid #444;
}
.grid .heads th {
  height: 20px;
  border-right: 1px solid #444;
  border-bottom: 1px solid #8f8f8f;
}
.grid .heads .cur { background: #6b6b6b; color: #fff; border-bottom: 2px solid #217346; }
.grid .corner {
  background: #262626 linear-gradient(to bottom right, transparent 50%, #5a5a5a 50%) no-repeat 11px 5px / 11px 12px;
}
.grid tbody th.cur { background: #6b6b6b; color: #eee; border-right: 2px solid #217346; }
.grid td {
  height: 20px;
  padding: 0 3px 2px 2px;
  white-space: nowrap;
  overflow: hidden;
  line-height: 17px;
  border-right: 1px solid #d4d4d4;
  border-bottom: 1px solid #d4d4d4;
}
.grid .r1 th { height: 51px; vertical-align: bottom; line-height: 20px; border-bottom-width: 3px; }
.grid .r1 td { height: 51px; }
.grid .dk th, .grid .lt th { height: 20px; }
.grid .dk td { background: #b4c6e7; border-color: #fff; }
.grid .lt td { background: #d9e1f2; border-color: #fff; }
.grid .dk td:nth-child(n+12), .grid .lt td:nth-child(n+12) { background: #fff; border-color: #d4d4d4; }
.grid a { color: #0563c1; text-decoration: underline; }

.grid td.hd {
  position: relative;
  background: #4472c4;
  color: #fff;
  font-weight: 700;
  font-size: 15px;
  text-align: center;
  overflow: visible;
  border-right-color: #fff;
  border-bottom: 3px solid #fff;
  padding: 0 3px;
}
.filter {
  position: absolute;
  right: 1px;
  bottom: 0;
  width: 17px;
  height: 17px;
  background: linear-gradient(#fff, #e4e4e4);
  border: 1px solid #a0a0a0;
}
.filter::after {
  content: "";
  position: absolute;
  left: 4px;
  top: 6px;
  border-left: 4px solid transparent;
  border-right: 4px solid transparent;
  border-top: 4px solid #666;
}
.filter.sorted::after { left: 2px; top: 8px; border-left-width: 3px; border-right-width: 3px; border-top-width: 3px; }
.filter.sorted::before {
  content: "";
  position: absolute;
  left: 10px;
  top: 3px;
  width: 1px;
  height: 9px;
  background: #555;
}
.grid td.last { position: relative; }
.grid td.last::after {
  content: "";
  position: absolute;
  right: 0;
  bottom: 0;
  border-left: 5px solid transparent;
  border-bottom: 5px solid #3a5fb0;
}
.grid td.sel { position: relative; overflow: visible; }
.grid td.sel::before {
  content: "";
  position: absolute;
  left: -2px;
  top: -2px;
  right: -2px;
  bottom: -1px;
  border: 2px solid #217346;
}
.grid td.sel::after {
  content: "";
  position: absolute;
  right: -4px;
  bottom: -3px;
  width: 6px;
  height: 6px;
  background: #217346;
}

/* sheet tabs */
.sheetbar {
  height: 28px;
  flex: none;
  background: #262626;
  border-top: 1px solid #6a6a6a;
  display: flex;
  position: relative;
}
.nav-l, .nav-r {
  width: 0;
  height: 0;
  margin-top: 8px;
  border-top: 4px solid transparent;
  border-bottom: 4px solid transparent;
}
.nav-l { margin-left: 28px; border-right: 5px solid #888; }
.nav-r { margin-left: 22px; border-left: 5px solid #888; }
.sheet-tab {
  margin-left: 38px;
  width: 158px;
  height: 24px;
  background: #fff;
  color: #217346;
  border-bottom: 2px solid #217346;
  font-family: "Lato", sans-serif;
  font-size: 14px;
  font-weight: 700;
  letter-spacing: .2px;
  text-align: center;
  line-height: 22px;
}
.add { margin: 5px 0 0 34px; }
.d2 { margin: 5px 0 0 843px; }
.hscroll {
  position: absolute;
  left: 1169px;
  width: 730px;
  top: 6px;
  height: 15px;
  display: flex;
  border: 1px solid #555;
}
.hs-btn { width: 15px; background: #333; display: flex; align-items: center; justify-content: center; flex: none; }
.hl, .hr { width: 0; height: 0; border-top: 4px solid transparent; border-bottom: 4px solid transparent; }
.hl { border-right: 4px solid #eee; }
.hr { border-left: 4px solid #eee; }
.hs-thumb { width: 650px; background: #333; border: 1px solid #4a4a4a; }
.hs-black { flex: 1; background: #0a0a0a; }

/* status bar */
.status {
  height: 16px;
  flex: none;
  background: #262626;
  border-top: 1px solid #3c3c3c;
  display: flex;
  line-height: 20px;
  position: relative;
  overflow: hidden;
}
.ready { margin-left: 11px; color: #ddd; }
.acc { margin: 2px 0 0 17px; }
.acc-text { margin-left: 4px; font-weight: 600; color: #eee; letter-spacing: -0.35px; }
.views { position: absolute; left: 1619px; top: 0; display: flex; height: 16px; }
.view { width: 40px; height: 16px; display: flex; justify-content: center; padding-top: 2px; flex: none; }
.view.on { background: #505050; }
.view:nth-child(2) { width: 41px; }
.view:nth-child(3) { width: 40px; }
.zm-minus { width: 7px; height: 1px; background: #ddd; margin: 10px 0 0 8px; flex: none; }
.slider { position: relative; width: 99px; height: 1px; background: #ddd; margin: 10px 0 0 5px; flex: none; }
.slider i { position: absolute; left: 46px; top: -6px; width: 3px; height: 12px; background: #eee; }
.zm-plus {
  width: 9px;
  height: 9px;
  margin: 6px 0 0 4px;
  background: linear-gradient(#ddd, #ddd) center / 9px 1px no-repeat, linear-gradient(#ddd, #ddd) center / 1px 9px no-repeat;
  flex: none;
}
.pct { margin-left: 8px; color: #ddd; white-space: nowrap; }
```
